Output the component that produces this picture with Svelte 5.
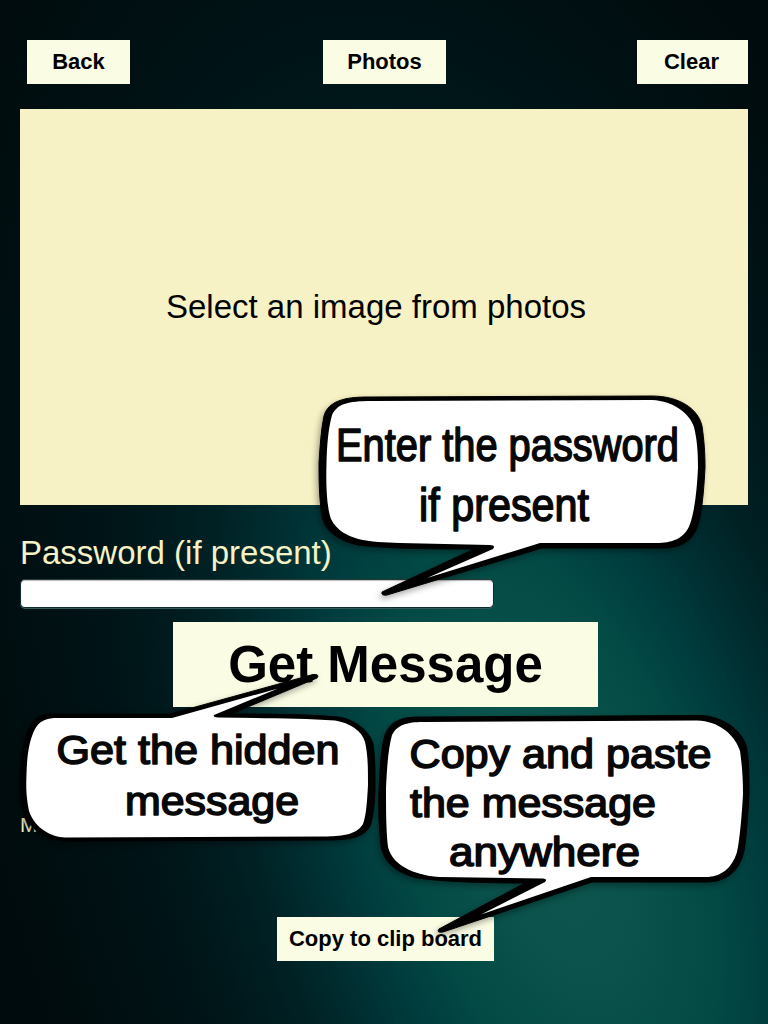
<script>
  const bubbles = [
    {
      outer: 'M367 397 L652 396 C678 396 698 408 702 426 C704 440 705 452 705 468 C704 485 703 502 700 517 C696 538 685 548 662 548 L542 548 L387 595 Q381 596 382 592 L474 549 C440 549 390 549 358 545 C335 540 324 528 322 516 C319 497 319 478 319 463 C320 447 321 430 324 416 C328 401 345 397 367 397 Z',
      inner: 'M375 401 L652 400 C674 401 690 414 694 427 C697 440 698 450 698 468 C697 488 695 510 690 524 C685 539 671 543 657 543 L540 543 L427 578 L493 549 Q496 545 490 545 L400 543 C370 542 342 541 331 519 C326 505 326 480 326.500 463 C327 446 328 430 332 415 C338 402 352 401 375 401 Z',
      lines: [
        { text: 'Enter the password', x: 336, y: 461, size: 47, width: 343 },
        { text: 'if present', x: 419, y: 520.5, size: 47, width: 170 }
      ]
    },
    {
      outer: 'M51 714 L170 714 L313 674.500 Q320 674 317 678 L231 714 C270 714 302 714 338 717 C354 719 370 731 373 744 C375 757 375 770 375 786 C375 802 373 818 370 826 C364 839 343 840 327 840 L65 841 C46 840 29 829 24 813 C20 800 20 790 20 778 C21 758 23 740 30 727 C36 716 43 714 51 714 Z',
      inner: 'M58 718 L172 718 L278 688.500 L214 715 Q213 717 218 717.500 C260 718 300 718 335 720.500 C350 723 362 731 365 742 C368 755 368 768 368 785 C367 804 366 816 363 824 C356 836 339 836 325 836.500 L65 837.500 C52 837 35 829 29 811 C26 796 26 786 26.500 774 C27 756 29 742 34 731 C39 720 47 718 58 718 Z',
      lines: [
        { text: 'Get the hidden', x: 56.5, y: 763.5, size: 41, width: 283 },
        { text: 'message', x: 125, y: 814.5, size: 41, width: 174 }
      ]
    },
    {
      outer: 'M420 717 L700 715.500 C724 716 744 732 747 749 C749 763 749 778 749 794 C748 812 747 833 744 851 C739 873 725 882 706 882 L592 882 L443 932 Q436 933 439 929 L525 883 C490 883 445 882 417 878 C397 873 384 863 381 846 C379 828 378 808 379 788 C380 768 381 748 385 735 C391 719 405 717 420 717 Z',
      inner: 'M425 722 L697 720.500 C719 721 735 735 740 751 C742 765 743 778 743 794 C742 812 740 838 737 852 C732 869 720 877 706 877 L591 877 L481 914.500 L545 882 Q548 879 543 878.500 L440 877 C420 876 393 868 388 847 C386 830 386 808 386 788 C387 768 388 750 392 735 C398 723 411 722 425 722 Z',
      lines: [
        { text: 'Copy and paste', x: 409.5, y: 767.5, size: 40.5, width: 302 },
        { text: 'the message', x: 410, y: 817, size: 40.5, width: 246 },
        { text: 'anywhere', x: 449, y: 866, size: 40.5, width: 191 }
      ]
    }
  ];
</script>

<main>
  <header>
    <button class="back">Back</button>
    <button class="photos">Photos</button>
    <button class="clear">Clear</button>
  </header>

  <section class="picture"><span>Select an image from photos</span></section>

  <label for="pw">Password (if present)</label>
  <input id="pw" type="text" />

  <button class="get">Get Message</button>
  <p class="output">M</p>
  <button class="copy">Copy to clip board</button>

  <svg class="overlay" width="768" height="1024" viewBox="0 0 768 1024">
    {#each bubbles as bubble}
      <g>
        <path class="outer" d={bubble.outer} />
        <path class="inner" d={bubble.inner} />
        {#each bubble.lines as line}
          <text x={line.x} y={line.y} font-size={line.size} textLength={line.width} lengthAdjust="spacingAndGlyphs">{line.text}</text>
        {/each}
      </g>
    {/each}
  </svg>
</main>

<style>
  :global(body) {
    margin: 0;
    background: #00080a;
  }
  main {
    position: relative;
    z-index: 0;
    box-sizing: border-box;
    width: 768px;
    height: 1024px;
    padding: 40px 20px 0;
    display: flex;
    flex-direction: column;
    align-items: flex-start;
    overflow: hidden;
    background: #00080a;
    font-family: 'Liberation Sans', Arial, sans-serif;
  }
  main::before {
    content: '';
    position: absolute;
    z-index: -1;
    left: -448px;
    top: -670px;
    width: 2000px;
    height: 3000px;
    transform: rotate(-18deg);
    background: radial-gradient(ellipse 520px 1080px at 50% 50%, #0d554d 0%, #0a524b 14%, #034a45 27%, #003d3e 37%, #002e31 47%, #002225 56%, #00191c 67%, #001215 80%, #000b0d 105%);
  }
  header {
    box-sizing: border-box;
    width: 728px;
    height: 44px;
    padding-left: 7px;
    display: flex;
    margin-bottom: 25px;
  }
  button {
    border: 0;
    border-radius: 0;
    padding: 0;
    margin: 0;
    background: #fafce3;
    color: #000;
    font: bold 22px 'Liberation Sans', Arial, sans-serif;
    height: 44px;
    flex: none;
  }
  .back {
    width: 103px;
  }
  .photos {
    width: 123px;
    margin-left: 193px;
  }
  .clear {
    width: 111px;
    margin-left: auto;
    padding-right: 2px;
  }
  .picture {
    width: 728px;
    height: 396px;
    flex: none;
    display: flex;
    align-items: center;
    justify-content: center;
    background: #f7f2c5;
    font-size: 33px;
  }
  .picture span {
    margin-right: 16px;
  }
  label {
    margin-top: 29px;
    height: 38px;
    line-height: 38px;
    font-size: 33px;
    color: #f7f2c5;
    white-space: nowrap;
  }
  input {
    box-sizing: border-box;
    width: 474px;
    height: 29px;
    margin: 7px 0 0;
    border: 1px solid #102b2c;
    border-top-color: #263b3b;
    border-radius: 5px;
    background: #fff;
    box-shadow: 0 1px 0 #325b59, inset 0 1px 1px #bbb;
  }
  .get {
    width: 425px;
    height: 85px;
    margin: 14px 0 0 153px;
    font-size: 51px;
  }
  .output {
    margin: 106px 0 0;
    height: 24px;
    line-height: 24px;
    font-size: 21px;
    color: #f7f2c5;
  }
  .copy {
    width: 217px;
    margin: 80px 0 0 257px;
  }
  .overlay {
    position: absolute;
    left: 0;
    top: 0;
    pointer-events: none;
  }
  .outer {
    fill: #000;
    stroke: #000;
    stroke-width: 1px;
    stroke-linejoin: round;
    filter: drop-shadow(-2px 3px 3px rgba(0, 0, 0, 0.35));
  }
  .inner {
    fill: #fff;
  }
  text {
    fill: #080808;
    stroke: #080808;
    stroke-width: 1.6px;
    stroke-linejoin: round;
  }
</style>
